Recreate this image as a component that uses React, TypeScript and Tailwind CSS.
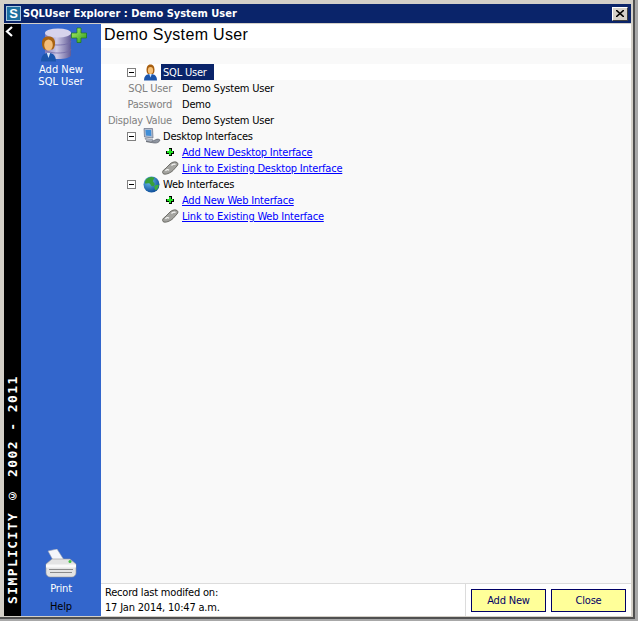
import React from "react";

const F = "font-['DejaVu_Sans_Condensed','DejaVu_Sans',sans-serif]";

function Minus() {
  return (
    <svg width="9" height="9" viewBox="0 0 9 9" className="shrink-0" shapeRendering="crispEdges">
      <rect x="0.5" y="0.5" width="8" height="8" fill="#fff" stroke="#808080" />
      <rect x="2" y="4" width="5" height="1" fill="#000" />
    </svg>
  );
}

function Person() {
  return (
    <svg width="15" height="17" viewBox="0 0 15 17" className="shrink-0">
      <path d="M1 16.500c0-4.500 2.500-6.500 6.500-6.500s6.500 2 6.500 6.500z" fill="#1c56ac" />
      <path d="M6.200 10l1.300 3.500L8.800 10z" fill="#d8ecff" />
      <path d="M3.500 6c0-3.800 1.800-5.500 4-5.500s4 1.700 4 5.500c0 2.500-1 4-2 4h-4c-1 0-2-1.500-2-4z" fill="#a85f10" />
      <ellipse cx="7.500" cy="6.500" rx="2.600" ry="3.400" fill="#f6c27a" />
    </svg>
  );
}

function Computer() {
  return (
    <svg width="18" height="17" viewBox="0 0 18 17" className="ml-px shrink-0">
      <path d="M1 .5h8.500l.5 9.500-8.500-1z" fill="#aebbd0" stroke="#667084" strokeWidth="0.7" />
      <path d="M2.500 2H8l.3 6L3 7.500z" fill="#3f8ed8" />
      <path d="M2 10.500l7.500 1 .5 1.500L4 13z" fill="#c5ccd8" stroke="#747c8c" strokeWidth="0.7" />
      <path d="M3 13.500l8 1.500c3 .5 5.500-1 6-3-1-1-2.500-1.200-4-.5L8 14z" fill="#8f95a0" stroke="#50555f" strokeWidth="0.6" />
    </svg>
  );
}

function Globe() {
  return (
    <svg width="17" height="17" viewBox="0 0 17 17" className="ml-px shrink-0">
      <defs>
        <radialGradient id="gl" cx="35%" cy="30%" r="75%">
          <stop offset="0%" stopColor="#6fc0f0" />
          <stop offset="100%" stopColor="#0a4a98" />
        </radialGradient>
      </defs>
      <circle cx="8.500" cy="8.500" r="8" fill="url(#gl)" />
      <path d="M4 2.500c2-1.500 5-2 7-1 1 1-1 2-1 3.500s2.500 2 1.500 4-3.500 1.500-4-.5S3.500 7.500 2 7.500C1.800 5.500 2.500 3.800 4 2.500z" fill="#37a03a" />
      <path d="M12 9.500c1.200-.8 2.800-1 3.800-.7 0 2.500-1.300 4.700-3.300 5.700-1-1.500-1.800-3.200-.5-5z" fill="#3fae3f" />
    </svg>
  );
}

function Link2() {
  return (
    <svg width="17" height="14" viewBox="0 0 17 14" className="shrink-0">
      <path d="M1 12.500c-1-1.500 0-3.500 2-4.500l5-5c1.500-1.500 4-2.500 6-2 2.200.7 2.500 2.500 1 4l-4 4.500c-2 2.200-8 5-10 3z" fill="#a4a4a0" stroke="#55554f" strokeWidth="0.8" />
      <path d="M3.500 10c1-1.500 2.500-1.800 3.500-.8M9.500 4.500c1-1.200 3-1.700 4-1" fill="none" stroke="#f4f4f2" strokeWidth="1.300" />
    </svg>
  );
}

function Plus() {
  return (
    <svg width="8" height="8" viewBox="0 0 8 8" className="shrink-0" shapeRendering="crispEdges">
      <path d="M2.500 0h3v2.500H8v3H5.500V8h-3V5.500H0v-3h2.500z" fill="#000" />
      <path d="M3 1h2v2h2v2H5v2H3V5H1V3h2z" fill="#22e022" />
    </svg>
  );
}

function DbUser() {
  return (
    <svg width="46" height="35" viewBox="0 0 46 35">
      <defs>
        <linearGradient id="db" x1="0" x2="1" y1="0" y2="0">
          <stop offset="0%" stopColor="#807ab8" />
          <stop offset="45%" stopColor="#cdc9e6" />
          <stop offset="100%" stopColor="#625b96" />
        </linearGradient>
        <linearGradient id="grn" x1="0" x2="1" y1="0" y2="1">
          <stop offset="0%" stopColor="#b4f26a" />
          <stop offset="100%" stopColor="#2c9a1e" />
        </linearGradient>
      </defs>
      <path d="M4 6v22c0 2.500 6 4 13 4s13-1.500 13-4V6z" fill="url(#db)" />
      <ellipse cx="17" cy="6" rx="13" ry="4.500" fill="#d6d3ec" />
      <path d="M4 14c0 2.500 6 4 13 4s13-1.500 13-4M4 22c0 2.500 6 4 13 4s13-1.500 13-4" fill="none" stroke="#736ca8" strokeWidth="0.8" />
      <path d="M0 34.500c0-6 3-8.500 7.500-8.500s7.500 2.500 7.500 8.500z" fill="#1c56ac" />
      <path d="M5.800 26l1.700 5 1.700-5z" fill="#d8ecff" />
      <path d="M1 16c0-5 3-6.500 6.500-6.500S14 11 14 16c0 4-1.500 6.500-3 6.500H4c-1.500 0-3-2.500-3-6.500z" fill="#a86210" />
      <ellipse cx="7.500" cy="18" rx="4.300" ry="5.500" fill="#f3bd78" />
      <path d="M36 1h4v5h5.500v5H40v4.500h-4V11h-5.500V6H36z" fill="url(#grn)" stroke="#1c7a14" strokeWidth="0.7" />
    </svg>
  );
}

function Printer() {
  return (
    <svg width="32" height="29" viewBox="0 0 32 29">
      <path d="M3 2l9-2 7 11-10 2z" fill="#f4f6fb" stroke="#9aa3b5" strokeWidth="0.6" />
      <path d="M1 15l6-5h18l6 5v9c0 2-2 4-4 4H5c-2 0-4-2-4-4z" fill="#e4e4e4" stroke="#999" strokeWidth="0.6" />
      <path d="M1 15.500h30v3H1z" fill="#fafafa" />
      <path d="M4 20.500h24M5 23.500h22" stroke="#8a8a8a" strokeWidth="1" />
      <circle cx="25" cy="12.500" r="1.500" fill="#44c044" />
    </svg>
  );
}

function Row({ label, value }: { label: string; value: string }) {
  return (
    <div className="flex h-4 items-center">
      <span className="w-[71px] translate-y-px whitespace-nowrap text-right text-[#808080]">{label}</span>
      <span className="ml-[10px] translate-y-px text-black">{value}</span>
    </div>
  );
}

function Node({ icon, text }: { icon: React.ReactNode; text: string }) {
  return (
    <div className="flex h-4 items-center">
      <span className="ml-[26px]"><Minus /></span>
      <span className="ml-[6px] flex w-[20px] justify-start">{icon}</span>
      <span className="ml-px translate-y-px text-black">{text}</span>
    </div>
  );
}

function LinkRow({ icon, right, text }: { icon: React.ReactNode; right: number; text: string }) {
  return (
    <div className="flex h-4 items-center">
      <span className="flex w-[81px] justify-end" style={{ paddingRight: right }}>{icon}</span>
      <a href="#" className="translate-y-px text-[#0000ff] underline">{text}</a>
    </div>
  );
}

export default function App() {
  return (
    <div className={`${F} h-[621px] w-[638px] overflow-hidden bg-[#a8a8a8] text-[11px] leading-4 tracking-[-0.2px]`}>
      <div className="flex h-[619px] w-[635px] flex-col border-r-2 border-b-2 border-[#505050] bg-[#d4d0c8] pt-[4px] pr-[2px] pb-[1px] pl-[4px]">
        <div className="flex h-[19px] shrink-0 items-center bg-[#0a246a] pl-[2px] pr-[3px]">
          <span className="flex h-[15px] w-[15px] items-center justify-center border border-[#a8c8e0] bg-[#1d6f9f] font-['Liberation_Sans',sans-serif] text-[13px] font-bold leading-none text-white">S</span>
          <span className="ml-[2px] flex-1 text-[11px] font-bold tracking-normal text-white">SQLUser Explorer : Demo System User</span>
          <span className="flex h-[14px] w-4 items-center justify-center border border-t-white border-l-white border-r-[#404040] border-b-[#404040] bg-[#d4d0c8]">
            <svg width="8" height="7" viewBox="0 0 8 7"><path d="M0 0l8 7M8 0L0 7" stroke="#000" strokeWidth="1.600" /></svg>
          </span>
        </div>
        <div className="flex min-h-0 flex-1 pt-[1px]">
          <div className="relative w-[17px] shrink-0 bg-black">
            <svg className="absolute left-[1px] top-[2px]" width="8" height="11" viewBox="0 0 8 11"><path d="M7 1L2 5.500 7 10" fill="none" stroke="#fff" strokeWidth="2.200" /></svg>
            <div className="absolute bottom-[12px] left-0 flex h-[230px] w-[17px] items-center justify-start rotate-180 [writing-mode:vertical-rl]">
              <span className="whitespace-nowrap font-['DejaVu_Sans_Mono',monospace] text-[13px] font-bold leading-[17px] tracking-[1.400px] text-white">SIMPLICITY © 2002 - 2011</span>
            </div>
          </div>
          <div className="flex w-[80px] shrink-0 flex-col items-center justify-between bg-[#3366cc] text-center">
            <div className="flex flex-col items-center pt-[3px]">
              <div className="pl-[6px]"><DbUser /></div>
              <div className="mt-[2px] leading-[12px] tracking-normal text-white">Add New<br />SQL User</div>
            </div>
            <div className="flex flex-col items-center">
              <Printer />
              <div className="mt-[2px] leading-[18px] text-white">Print</div>
              <div className="leading-[18px] text-black">Help</div>
            </div>
          </div>
          <div className="flex min-w-0 flex-1 flex-col bg-white">
            <div className="flex h-6 shrink-0 items-center pb-[3px] pl-[3px] font-['Liberation_Sans',sans-serif] text-[16px] tracking-[0.35px] text-black">Demo System User</div>
            <div className="flex-1 bg-[#f9f9f9] pt-[16px]">
              <div className="flex h-4 items-center bg-white">
                <span className="ml-[26px]"><Minus /></span>
                <span className="ml-[6px] flex w-[16px] justify-center"><Person /></span>
                <span className="ml-[3px] h-4 w-[53px] bg-[#0a246a] px-[2px] pt-px text-white">SQL User</span>
              </div>
              <Row label="SQL User" value="Demo System User" />
              <Row label="Password" value="Demo" />
              <Row label="Display Value" value="Demo System User" />
              <Node icon={<Computer />} text="Desktop Interfaces" />
              <LinkRow icon={<Plus />} right={8} text="Add New Desktop Interface" />
              <LinkRow icon={<Link2 />} right={3} text="Link to Existing Desktop Interface" />
              <Node icon={<Globe />} text="Web Interfaces" />
              <LinkRow icon={<Plus />} right={8} text="Add New Web Interface" />
              <LinkRow icon={<Link2 />} right={3} text="Link to Existing Web Interface" />
            </div>
            <div className="flex h-[33px] shrink-0 border-t border-[#dcdcdc] bg-white">
              <div className="flex-1 pl-[4px] pt-[1px] leading-[15px] text-black">Record last modifed on:<br />17 Jan 2014, 10:47 a.m.</div>
              <div className="flex items-center gap-[5px] border-l border-[#dcdcdc] pl-[5px] pr-[5px]">
                <button className="h-[23px] w-[75px] border border-[#000066] bg-[#ffff99] pt-[2px] text-[#000066]">Add New</button>
                <button className="h-[23px] w-[75px] border border-[#000066] bg-[#ffff99] pt-[2px] text-[#000066]">Close</button>
              </div>
            </div>
          </div>
        </div>
      </div>
    </div>
  );
}
